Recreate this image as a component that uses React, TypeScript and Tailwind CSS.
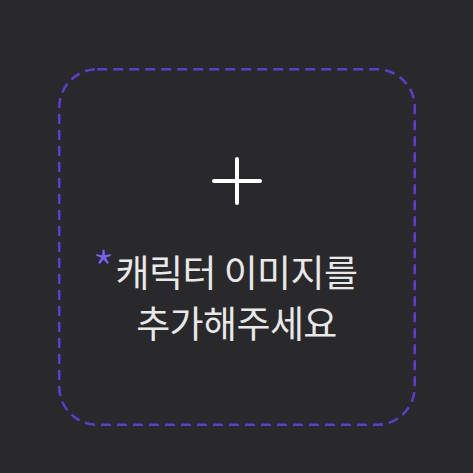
export default function App() {
  return (
    <div className="w-full h-[473px] bg-[#29292b] flex justify-center pt-[68px]" style={{ fontFamily: '"Noto Sans CJK KR", "Noto Sans", sans-serif' }}>
      <div className="relative w-[358px] h-[358px] flex flex-col items-center pt-[88px]">
        {/* dashed outline */}
        <svg className="absolute inset-0 pointer-events-none" width="358" height="358" viewBox="0 0 358 358">
          <rect x="1.25" y="1.25" width="355.5" height="355.5" rx="38" ry="38" fill="none" stroke="#5b3dd6" strokeWidth="2.5" strokeDasharray="10 6" />
        </svg>
        <svg width="50" height="50" viewBox="0 0 50 50">
          <path d="M25 3v44M2 25h46" stroke="#ffffff" strokeWidth="4" strokeLinecap="round" />
        </svg>
        <p className="mt-[40px] text-[37px] leading-[51px] text-[#e8e8e8] text-center tracking-[-0.6px]">
          <span className="relative">
            <span className="absolute left-[-23px] top-[-2px] text-[50px] leading-[51px] font-extralight text-[#7762f5]">*</span>
            캐릭터
          </span>{" "}
          이미지를
          <br />
          추가해주세요
        </p>
      </div>
    </div>
  );
}
